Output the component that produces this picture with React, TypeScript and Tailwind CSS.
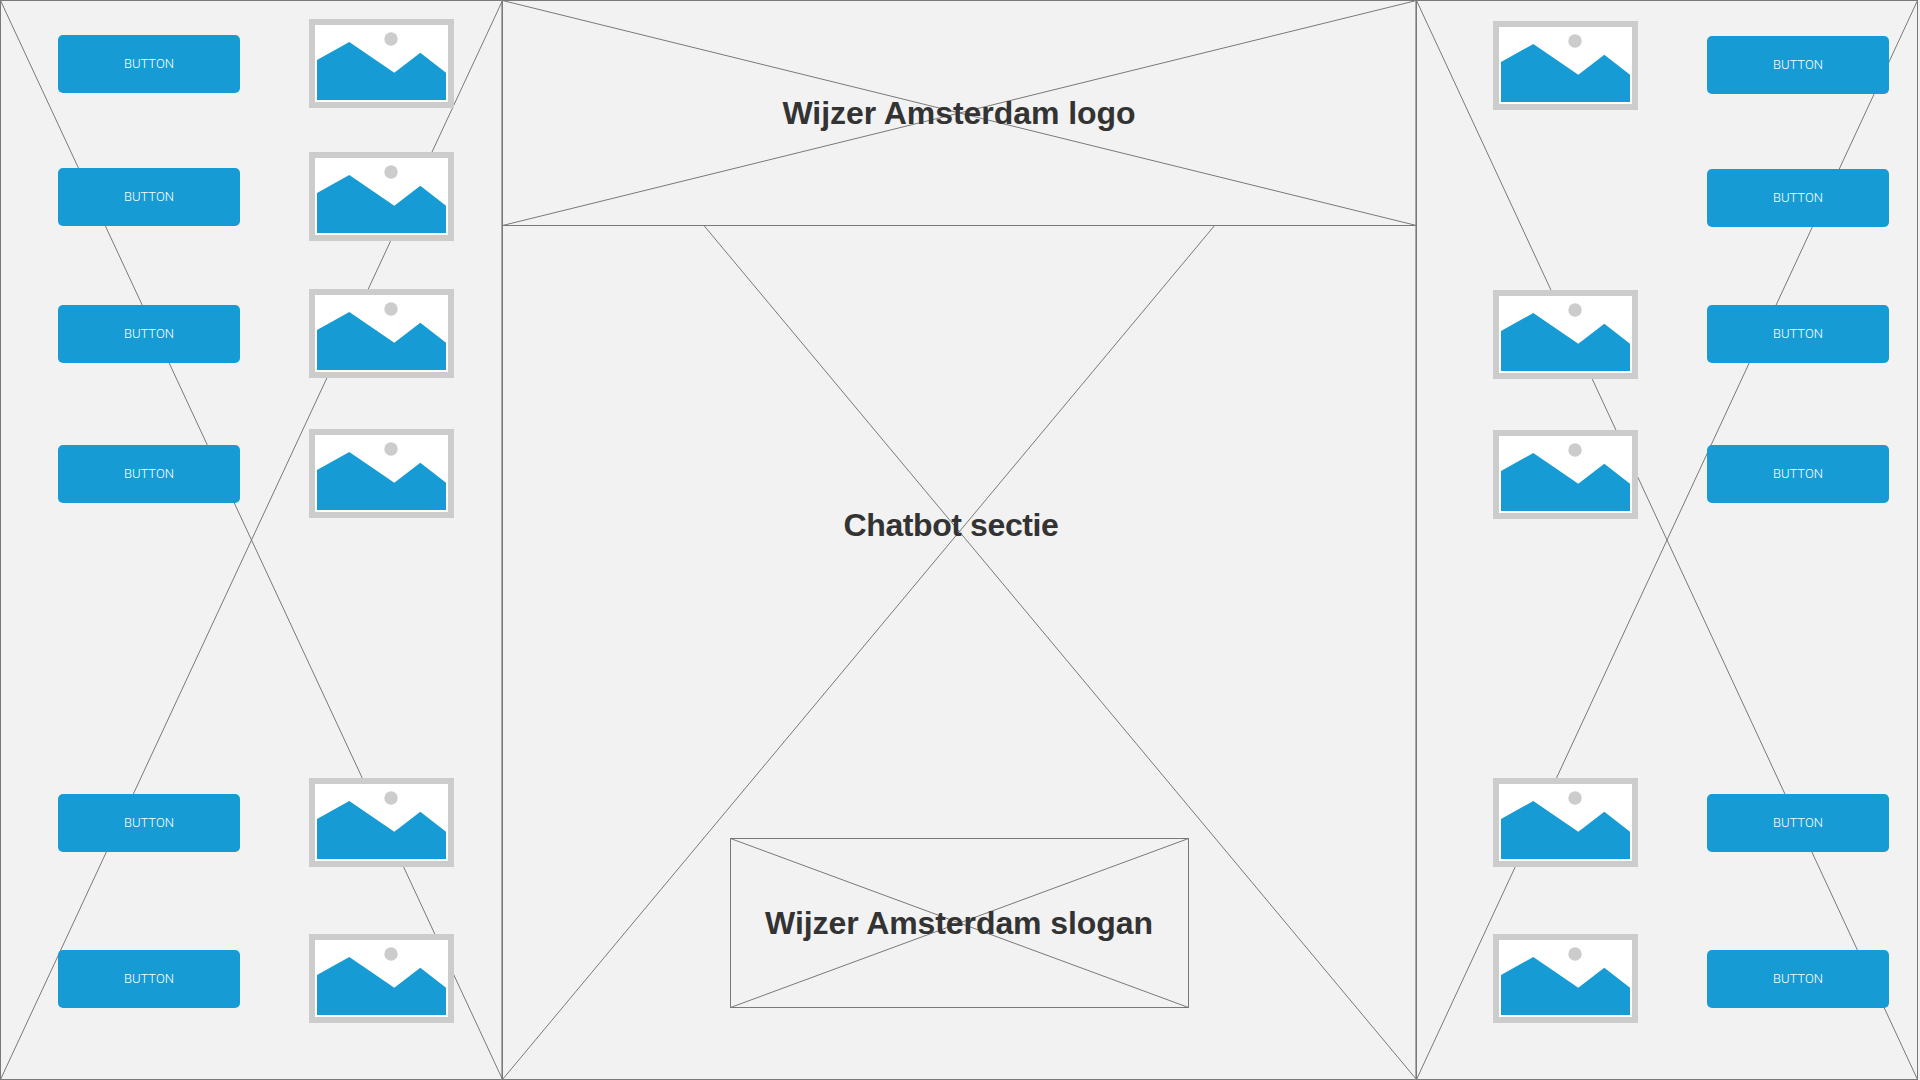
import React from 'react';

const XLines: React.FC<{ w: number; h: number; className?: string }> = ({ w, h, className }) => (
  <svg width={w} height={h} viewBox={`0 0 ${w} ${h}`} className={`absolute -left-px -top-px ${className ?? ''}`} fill="none" stroke="#797979" strokeWidth="1">
    <line x1="0.5" y1="0.5" x2={w - 0.5} y2={h - 0.5} />
    <line x1={w - 0.5} y1="0.5" x2="0.5" y2={h - 0.5} />
  </svg>
);

const Btn: React.FC<{ className?: string }> = ({ className }) => (
  <button className={`relative w-[182px] h-[58px] shrink-0 rounded-[5px] bg-[#169bd5] text-white text-[13px] font-light font-['Roboto',sans-serif] flex items-center justify-center ${className ?? ''}`}>
    BUTTON
  </button>
);

const ImagePlaceholder: React.FC<{ className?: string }> = ({ className }) => (
  <svg width="145" height="89" viewBox="0 0 145 89" className={`relative block shrink-0 ${className ?? ''}`}>
    <rect x="0" y="0" width="145" height="89" fill="#cccccc" />
    <rect x="6" y="6" width="133" height="77" fill="#ffffff" />
    <circle cx="82" cy="20" r="6.7" fill="#cccccc" />
    <path d="M8 41 L40.3 23 L85.3 53.7 L111.3 33.7 L137 53.7 L137 81 L8 81 Z" fill="#169bd5" />
  </svg>
);

const App: React.FC = () => {
  return (
    <div className="flex w-[1920px] h-[1080px] bg-[#f2f2f2] overflow-hidden font-['Liberation_Sans',sans-serif] text-[#333333]">
      {/* left */}
      <div className="relative flex shrink-0 w-[502px] h-[1080px] border border-[#797979] border-r-[#aaaaaa]">
        <XLines w={503} h={1080} />
        <div className="flex flex-col ml-[57px] pt-[34px]">
          <Btn />
          <Btn className="mt-[75px]" />
          <Btn className="mt-[79px]" />
          <Btn className="mt-[82px]" />
          <Btn className="mt-[291px]" />
          <Btn className="mt-[98px]" />
        </div>
        <div className="flex flex-col ml-[69px] pt-[18px]">
          <ImagePlaceholder />
          <ImagePlaceholder className="mt-[44px]" />
          <ImagePlaceholder className="mt-[48px]" />
          <ImagePlaceholder className="mt-[51px]" />
          <ImagePlaceholder className="mt-[260px]" />
          <ImagePlaceholder className="mt-[67px]" />
        </div>
      </div>

      {/* center */}
      <div className="flex flex-col shrink-0 w-[914px] h-[1080px] border border-[#797979] border-r-[#aaaaaa]">
        <div className="relative h-[225px] shrink-0 border-b border-[#797979] pt-[94px] text-center">
          <svg width="915" height="226" viewBox="0 0 915 226" className="absolute -left-px -top-px" fill="none" stroke="#797979" strokeWidth="1">
            <line x1="0.5" y1="0.5" x2="914.5" y2="225.5" />
            <line x1="914.5" y1="0.5" x2="0.5" y2="225.5" />
          </svg>
          <h1 className="relative text-[32px] leading-[37px] font-bold tracking-[-0.05px]">Wijzer Amsterdam logo</h1>
        </div>
        <div className="relative flex flex-col items-center flex-1">
          <svg width="915" height="855" viewBox="0 0 915 855" className="absolute -left-px -top-px" fill="none" stroke="#797979" strokeWidth="1">
            <line x1="201.5" y1="0" x2="914.5" y2="854.5" />
            <line x1="713" y1="0" x2="0.5" y2="854.5" />
          </svg>
          <h2 className="relative mt-[281px] pr-4 text-[32px] leading-[37px] font-bold tracking-[-0.4px]">Chatbot sectie</h2>
          <div className="relative flex items-center justify-center w-[459px] h-[170px] mt-[294px] border border-[#797979]">
            <XLines w={459} h={170} />
            <span className="relative text-[32px] leading-[37px] font-bold tracking-[-0.08px]">Wijzer Amsterdam slogan</span>
          </div>
        </div>
      </div>

      {/* right */}
      <div className="relative flex shrink-0 w-[502px] h-[1080px] border border-[#797979]">
        <XLines w={502} h={1080} />
        <div className="flex flex-col ml-[76px] pt-[20px]">
          <ImagePlaceholder />
          <ImagePlaceholder className="mt-[180px]" />
          <ImagePlaceholder className="mt-[51px]" />
          <ImagePlaceholder className="mt-[259px]" />
          <ImagePlaceholder className="mt-[67px]" />
        </div>
        <div className="flex flex-col ml-[69px] pt-[35px]">
          <Btn />
          <Btn className="mt-[75px]" />
          <Btn className="mt-[78px]" />
          <Btn className="mt-[82px]" />
          <Btn className="mt-[291px]" />
          <Btn className="mt-[98px]" />
        </div>
      </div>
    </div>
  );
};

export default App;
